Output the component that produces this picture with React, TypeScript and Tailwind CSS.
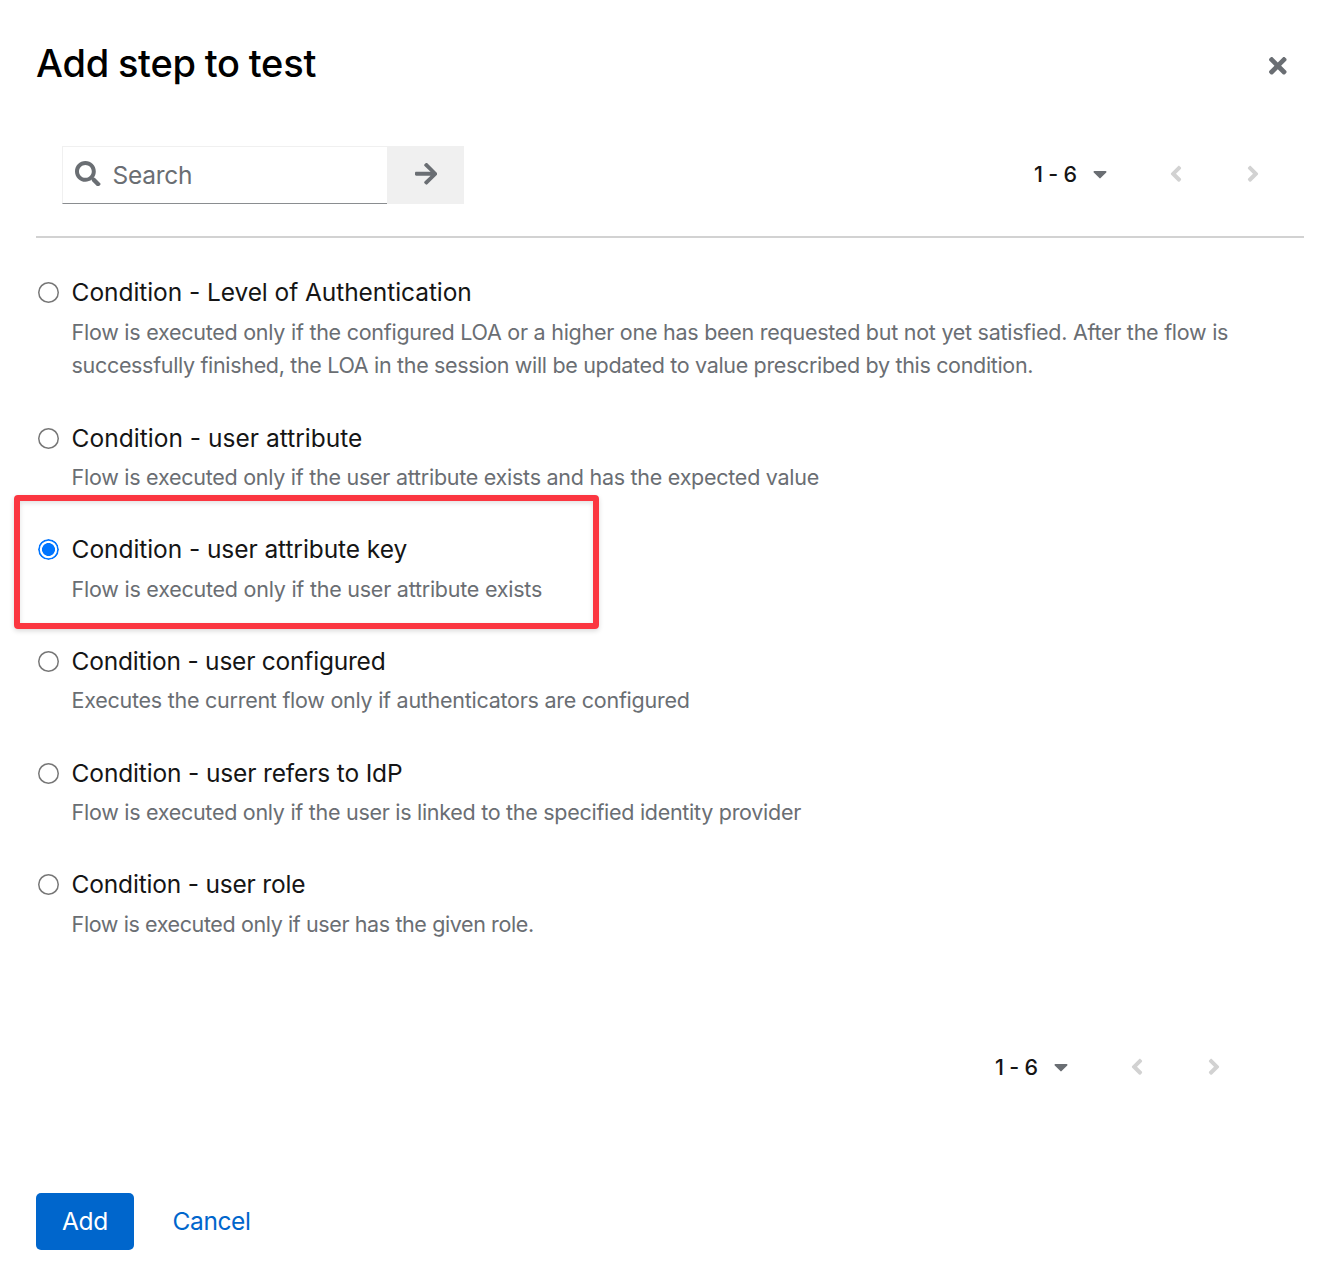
import { useState } from "react";
import { FaAngleLeft, FaAngleRight, FaArrowRight, FaCaretDown, FaSearch, FaTimes } from "react-icons/fa";

type Line = { text: string; tracking: string };
type Step = { id: string; name: string; tracking: string; lines: Line[] };

const steps: Step[] = [
  {
    id: "loa",
    name: "Condition - Level of Authentication",
    tracking: "tracking-[-0.07px]",
    lines: [
      {
        text: "Flow is executed only if the configured LOA or a higher one has been requested but not yet satisfied. After the flow is",
        tracking: "tracking-[-0.26px]",
      },
      {
        text: "successfully finished, the LOA in the session will be updated to value prescribed by this condition.",
        tracking: "tracking-[-0.33px]",
      },
    ],
  },
  {
    id: "attribute",
    name: "Condition - user attribute",
    tracking: "tracking-[0.02px]",
    lines: [{ text: "Flow is executed only if the user attribute exists and has the expected value", tracking: "tracking-[-0.265px]" }],
  },
  {
    id: "attribute-key",
    name: "Condition - user attribute key",
    tracking: "tracking-[-0.07px]",
    lines: [{ text: "Flow is executed only if the user attribute exists", tracking: "tracking-[-0.24px]" }],
  },
  {
    id: "configured",
    name: "Condition - user configured",
    tracking: "tracking-[-0.22px]",
    lines: [{ text: "Executes the current flow only if authenticators are configured", tracking: "tracking-[-0.26px]" }],
  },
  {
    id: "idp",
    name: "Condition - user refers to IdP",
    tracking: "tracking-[-0.15px]",
    lines: [{ text: "Flow is executed only if the user is linked to the specified identity provider", tracking: "tracking-[-0.285px]" }],
  },
  {
    id: "role",
    name: "Condition - user role",
    tracking: "tracking-[-0.19px]",
    lines: [{ text: "Flow is executed only if user has the given role.", tracking: "tracking-[-0.395px]" }],
  },
];

function Pagination() {
  return (
    <div className="flex h-[58px] items-center text-[25.6px]">
      <button className="flex items-center text-[#151515]">
        <span className="w-[59px] text-left text-[21.5px] font-medium tracking-[-0.2px]">1 - 6</span>
        <FaCaretDown className="mr-px w-[14px] text-[#6a6e73]" />
      </button>
      <button className="ml-[60px] text-[#d2d2d2]" aria-label="Previous page">
        <FaAngleLeft className="h-[25.6px] w-[16px]" />
      </button>
      <button className="ml-[61px] text-[#d2d2d2]" aria-label="Next page">
        <FaAngleRight className="h-[25.6px] w-[16px]" />
      </button>
    </div>
  );
}

export default function App() {
  const [selected, setSelected] = useState("attribute-key");
  return (
    <main className="flex h-[1268px] w-[1336px] flex-col bg-white pr-8 pl-9 font-['Inter',sans-serif]">
      <header className="flex h-[146px] items-start justify-between pt-[38px]">
        <h1 className="text-[38px] leading-[50px] font-medium tracking-[-0.22px] [word-spacing:-1px] text-black">
          Add step to test
        </h1>
        <button className="mt-[15px] mr-[17px] text-[25.6px] text-[#6a6e73]" aria-label="Close">
          <FaTimes className="h-[25.6px] w-[17.6px]" />
        </button>
      </header>

      <div className="flex h-[92px] items-start justify-between border-b-2 border-[#d2d2d2] pr-[43px] pl-[26px]">
        <div className="flex h-[58px]">
          <label className="flex w-[325px] items-center border border-r-0 border-[#f0f0f0] border-b-[#8a8d90] pl-3">
            <FaSearch className="mb-[3px] text-[25.6px] text-[#6a6e73]" />
            <input
              type="text"
              placeholder="Search"
              className="ml-[12px] w-60 bg-transparent text-[24.5px] tracking-[-0.3px] outline-none placeholder:text-[#6a6e73]"
            />
          </label>
          <button className="flex w-[77px] items-center justify-center bg-[#f0f0f0] pb-[3px] pl-px" aria-label="Search">
            <FaArrowRight className="h-[25.6px] w-[22.4px] text-[#6a6e73]" />
          </button>
        </div>
        <div className="-mt-[1px]">
          <Pagination />
        </div>
      </div>

      <div className="flex flex-col gap-[35.5px] pt-[35.1px]">
        {steps.map((step) => (
          <label key={step.id} className="relative flex gap-[12.6px] pl-[2px]">
            <input
              type="radio"
              name="step"
              checked={selected === step.id}
              onChange={() => setSelected(step.id)}
              className="mt-[9px] size-[21px] shrink-0 appearance-none rounded-full bg-white shadow-[inset_0_0_0_1.5px_#767676] checked:bg-[radial-gradient(circle,#0075ff_6.1px,#ffffff_6.8px)] checked:shadow-[inset_0_0_0_1.8px_#0075ff]"
            />
            <div className="flex flex-col gap-1 whitespace-nowrap">
              <span className={`text-[24.5px] leading-[38.4px] text-[#151515] ${step.tracking}`}>{step.name}</span>
              <span className="flex flex-col text-[21.5px] leading-[33.8px] text-[#6a6e73]">
                {step.lines.map((line) => (
                  <span key={line.text} className={line.tracking}>
                    {line.text}
                  </span>
                ))}
              </span>
            </div>
            {step.id === "attribute-key" && (
              <span className="pointer-events-none absolute -top-[35.5px] -left-[22.5px] h-[134px] w-[585.5px] rounded-[4px] border-6 border-[#fb3640] shadow-[0_2px_5px_rgba(0,0,0,0.15),inset_0_2px_5px_rgba(0,0,0,0.12)]" />
            )}
          </label>
        ))}
      </div>

      <div className="mt-auto flex justify-end pr-[82px]">
        <Pagination />
      </div>

      <footer className="mt-[97px] mb-[18px] flex items-center text-[24.5px]">
        <button className="h-[57px] w-[98px] rounded-[5px] bg-[#0066cc] tracking-[-0.3px] text-white">Add</button>
        <button className="ml-[38.5px] tracking-[-0.38px] text-[#0066cc]">Cancel</button>
      </footer>
    </main>
  );
}
